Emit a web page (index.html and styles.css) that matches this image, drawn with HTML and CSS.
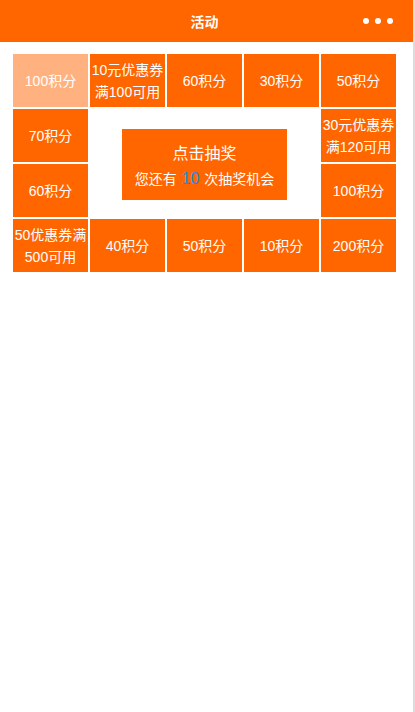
FILE: index.html
```html
<!DOCTYPE html>
<html lang="zh-CN">
<head>
  <meta charset="UTF-8" />
  <meta name="viewport" content="width=device-width, initial-scale=1.0"/>
  <title>活动</title>
  <link rel="stylesheet" href="styles.css">
</head>
<body>
  <div class="page">
    <div class="header">
      <span class="header-title">活动</span>
      <span class="header-more"><i></i><i></i><i></i></span>
    </div>
    <div class="lottery">
      <div class="prize active">100积分</div>
      <div class="prize">10元优惠券<br>满100可用</div>
      <div class="prize">60积分</div>
      <div class="prize">30积分</div>
      <div class="prize">50积分</div>
      <div class="prize">70积分</div>
      <div class="lottery-center">
        <div class="draw-btn">
          <div class="draw-title">点击抽奖</div>
          <div class="draw-count">您还有 <span class="num">10</span> 次抽奖机会</div>
        </div>
      </div>
      <div class="prize">30元优惠券<br>满120可用</div>
      <div class="prize">60积分</div>
      <div class="prize">100积分</div>
      <div class="prize">50优惠券满<br>500可用</div>
      <div class="prize">40积分</div>
      <div class="prize">50积分</div>
      <div class="prize">10积分</div>
      <div class="prize">200积分</div>
    </div>
  </div>
</body>
</html>
```

FILE: styles.css
```css
html, body {
  margin: 0;
  padding: 0;
  background: #fff;
}
body {
  font-family: "Liberation Sans", "Noto Sans CJK SC", sans-serif;
  color: #fff;
}
.page {
  width: 413px;
  height: 712px;
  border-right: 2px solid #dcdcdc;
}
.header {
  height: 42px;
  background: #ff6600;
  display: flex;
  align-items: center;
  justify-content: center;
  position: relative;
}
.header-title {
  font-size: 14px;
  font-weight: bold;
  margin-left: -4px;
}
.header-more {
  position: absolute;
  right: 20px;
  top: 18px;
  display: flex;
  gap: 6px;
}
.header-more i {
  width: 6px;
  height: 6px;
  border-radius: 50%;
  background: #fff;
}
.lottery {
  margin: 12px 0 0 13px;
  display: grid;
  grid-template-columns: repeat(5, 75px);
  grid-template-rows: repeat(4, 53px);
  gap: 2px;
}
.prize {
  background: #ff6600;
  display: flex;
  align-items: center;
  justify-content: center;
  text-align: center;
  font-size: 14px;
  line-height: 22px;
}
.prize.active {
  background: #ffb27f;
}
.lottery-center {
  grid-column: 2 / 5;
  grid-row: 2 / 4;
  display: flex;
  align-items: center;
  justify-content: center;
}
.draw-btn {
  width: 165px;
  height: 71px;
  box-sizing: border-box;
  padding-top: 12px;
  margin-top: 2px;
  background: #ff6600;
  text-align: center;
  cursor: pointer;
}
.draw-title {
  font-size: 16px;
  line-height: 25px;
}
.draw-count {
  font-size: 14px;
  line-height: 25px;
}
.draw-count .num {
  color: #1a8cff;
  font-size: 16px;
  margin: 0 1px;
}
```
